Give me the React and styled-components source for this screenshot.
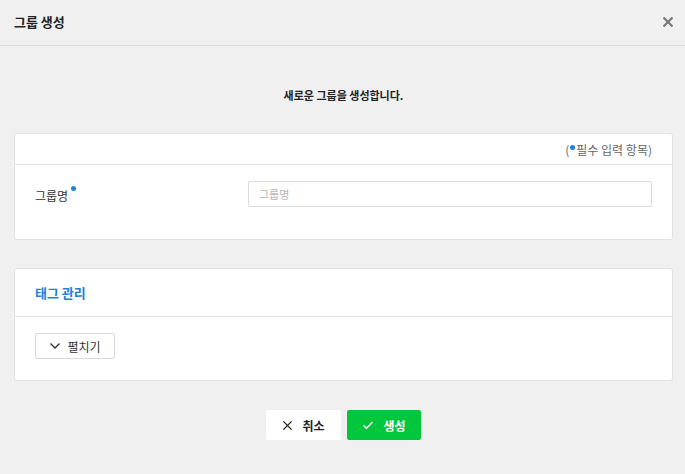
import React from 'react';
import styled, { createGlobalStyle } from 'styled-components';

const GlobalStyle = createGlobalStyle`
  html, body {
    margin: 0;
    padding: 0;
    background: #f0f0f0;
  }
  body {
    font-family: "Noto Sans CJK KR", "Noto Sans", sans-serif;
    color: #222;
  }
  * { box-sizing: border-box; }
`;

const Modal = styled.div`
  width: 685px;
  height: 474px;
  background: #f0f0f0;
`;

const Header = styled.div`
  height: 46px;
  display: flex;
  align-items: center;
  justify-content: space-between;
  padding: 0 14px 2px 14px;
  border-bottom: 1px solid #dcdcdc;
`;

const Title = styled.h1`
  margin: 0;
  font-size: 13px;
  font-weight: 700;
  color: #222;
`;

const CloseButton = styled.button`
  border: none;
  background: none;
  padding: 0;
  margin-right: -2px;
  display: flex;
  cursor: pointer;
`;

const Body = styled.div`
  padding: 0 12px 0 14px;
`;

const Intro = styled.p`
  margin: 41px 0 30px;
  text-align: center;
  font-size: 11px;
  line-height: 16px;
  font-weight: 700;
  color: #222;
`;

const Card = styled.section`
  background: #fff;
  border: 1px solid #e2e2e2;
  border-radius: 3px;
  margin-bottom: ${({ $gap }) => $gap || 0}px;
`;

const CardTop = styled.div`
  height: ${({ $h }) => $h}px;
  display: flex;
  align-items: center;
  justify-content: ${({ $right }) => ($right ? 'flex-end' : 'flex-start')};
  padding: 0 20px;
  border-bottom: 1px solid #e2e2e2;
`;

const Note = styled.span`
  font-size: 12px;
  color: #666;
  display: flex;
  align-items: center;
`;

const Dot = styled.i`
  display: inline-block;
  width: 5px;
  height: 5px;
  border-radius: 50%;
  background: #1a84de;
  align-self: flex-start;
  margin: ${({ $m }) => $m || '4px 1px 0 1px'};
`;

const FieldRow = styled.div`
  display: grid;
  grid-template-columns: 213px 1fr;
  align-items: center;
  padding: 16px 20px 32px;
`;

const Label = styled.label`
  font-size: 12px;
  color: #333;
  display: flex;
  align-items: flex-start;
  margin-top: 2px;
`;

const TextInput = styled.input`
  height: 26px;
  width: 100%;
  border: 1px solid #dcdcdc;
  border-radius: 2px;
  padding: 0 10px;
  font-family: inherit;
  font-size: 11px;
  color: #333;
  outline: none;
  &::placeholder { color: #b5b5b5; }
`;

const SectionTitle = styled.h2`
  margin: 0;
  font-size: 13px;
  font-weight: 700;
  color: #1c80d8;
`;

const CardBody = styled.div`
  padding: 16px 20px 21px;
`;

const ToggleButton = styled.button`
  height: 26px;
  width: 80px;
  border: 1px solid #d9d9d9;
  border-radius: 2px;
  background: #fff;
  display: flex;
  align-items: center;
  justify-content: center;
  gap: 6px;
  font-family: inherit;
  font-size: 12px;
  color: #333;
  cursor: pointer;
`;

const Footer = styled.div`
  display: flex;
  justify-content: center;
  gap: 6px;
  margin-top: 29px;
`;

const ActionButton = styled.button`
  height: 30px;
  width: ${({ $w }) => $w}px;
  border: none;
  border-radius: 2px;
  background: ${({ $primary }) => ($primary ? '#00c73c' : '#fff')};
  color: ${({ $primary }) => ($primary ? '#fff' : '#222')};
  display: flex;
  align-items: center;
  justify-content: center;
  gap: 9px;
  font-family: inherit;
  font-size: 12px;
  font-weight: 700;
  cursor: pointer;
`;

const Icon = ({ children, size = 12, color = 'currentColor', width = 1.6 }) => (
  <svg width={size} height={size} viewBox="0 0 12 12" fill="none" stroke={color}
    strokeWidth={width} strokeLinecap="square">
    {children}
  </svg>
);

export default function App() {
  return (
    <>
      <GlobalStyle />
      <Modal>
        <Header>
          <Title>그룹 생성</Title>
          <CloseButton aria-label="닫기">
            <Icon size={10} color="#777" width={2.6}>
              <path d="M1.5 1.5 L10.5 10.5 M10.5 1.5 L1.5 10.5" />
            </Icon>
          </CloseButton>
        </Header>
        <Body>
          <Intro>새로운 그룹을 생성합니다.</Intro>

          <Card $gap={28}>
            <CardTop $h={31} $right>
              <Note>(<Dot />필수 입력 항목)</Note>
            </CardTop>
            <FieldRow>
              <Label>그룹명<Dot $m="-1px 0 0 3px" /></Label>
              <TextInput placeholder="그룹명" />
            </FieldRow>
          </Card>

          <Card>
            <CardTop $h={48}>
              <SectionTitle>태그 관리</SectionTitle>
            </CardTop>
            <CardBody>
              <ToggleButton>
                <Icon size={12} color="#333" width={1.3}>
                  <path d="M1.5 3.5 L6 8 L10.5 3.5" strokeLinecap="butt" />
                </Icon>
                펼치기
              </ToggleButton>
            </CardBody>
          </Card>

          <Footer>
            <ActionButton $w={75}>
              <Icon size={11} color="#222" width={1.5}>
                <path d="M1.5 1.5 L10.5 10.5 M10.5 1.5 L1.5 10.5" strokeLinecap="butt" />
              </Icon>
              취소
            </ActionButton>
            <ActionButton $w={74} $primary>
              <Icon size={12} color="#fff" width={1.5}>
                <path d="M1.5 6.5 L4.5 9.2 L10.5 3" strokeLinecap="butt" />
              </Icon>
              생성
            </ActionButton>
          </Footer>
        </Body>
      </Modal>
    </>
  );
}
